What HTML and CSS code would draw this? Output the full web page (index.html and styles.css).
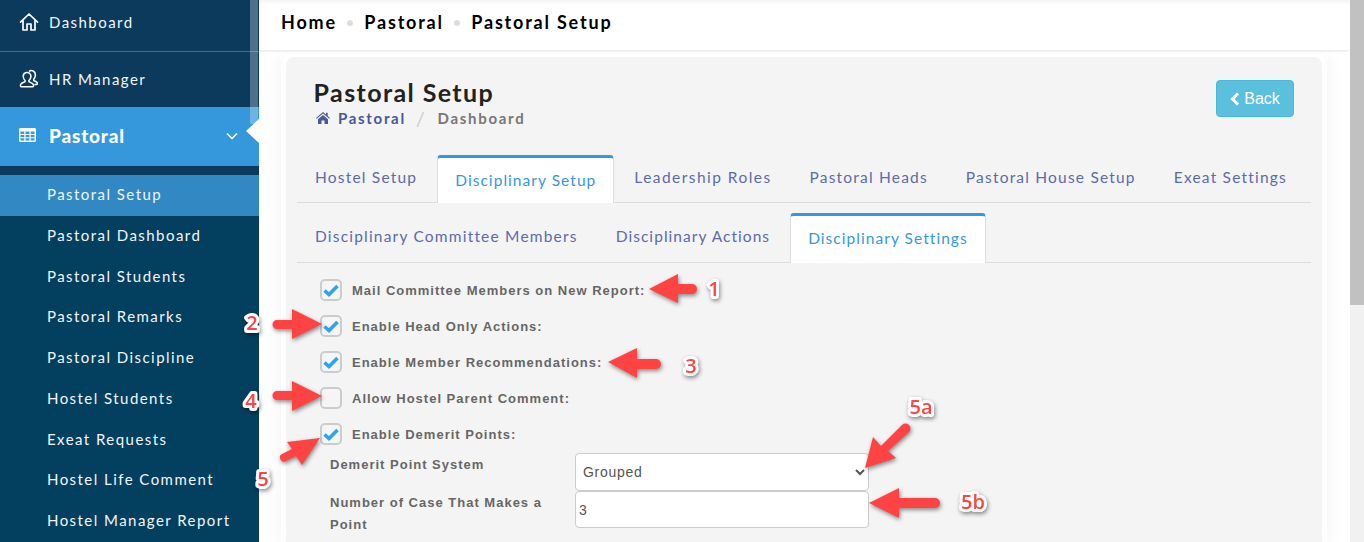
FILE: index.html
```html
<!DOCTYPE html>
<html lang="en">
<head>
<meta charset="utf-8">
<title>Pastoral Setup</title>
<link rel="stylesheet" href="styles.css">
</head>
<body>
<div class="app">
  <aside class="sidebar">
    <div class="thumb"></div>
    <a class="top-item first">
      <svg class="top-icon" viewBox="0 0 20 20"><path d="M1.500 10.200 10 2l8.500 8.200M4 8v10h4v-6h4v6h4V8" fill="none" stroke="#fff" stroke-width="1.700" stroke-linejoin="round" stroke-linecap="round"/></svg>
      <span>Dashboard</span>
    </a>
    <a class="top-item second">
      <svg class="top-icon" viewBox="0 0 20 20"><path d="M7.500 3.500c-2.300.3-3.500 2-3.200 4.500.2 1.600.9 2.800 1.800 3.500v1.200c-1.500.8-4 1.200-4.600 3-.2.800.1 2 1 2h11c1 0 1.200-1.200 1-2-.6-1.800-3.200-2.200-4.600-3v-1.200c1.600-1.300 2.300-4 1.600-6-.5-1.500-2-2.300-4-2zM10 2.500c1-1 2.800-1.200 4.200-.5 2 1.100 2.500 3.600 1.800 6-.3 1-.8 1.800-1.300 2.300v1.200c1.100.6 3 1 3.500 2.300.3.800 0 1.700-.7 1.700h-2" fill="none" stroke="#fff" stroke-width="1.500" stroke-linejoin="round"/></svg>
      <span>HR Manager</span>
    </a>
    <a class="top-item active">
      <svg class="grid-icon" viewBox="0 0 17 14"><path d="M0 1.500C0 .7.700 0 1.500 0h14c.8 0 1.500.7 1.500 1.500v11c0 .8-.7 1.500-1.500 1.500h-14C.7 14 0 13.300 0 12.500zM1.500 3.500v2.400h3.800V3.500zm5 0v2.400h4V3.500zm5.200 0v2.400h3.800V3.500zM1.500 7v2.200h3.800V7zm5 0v2.200h4V7zm5.200 0v2.200h3.800V7zM1.500 10.300v2.200h3.800v-2.200zm5 0v2.200h4v-2.200zm5.200 0v2.200h3.800v-2.200z" fill="#fff" fill-rule="evenodd"/></svg>
      <span>Pastoral</span>
      <svg class="chevron" viewBox="0 0 12 8"><path d="M1 1.500 6 6.500l5-5" fill="none" stroke="#fff" stroke-width="1.500"/></svg>
      <i class="notch"></i>
    </a>
    <nav class="submenu">
      <a class="sub-item current">Pastoral Setup</a>
      <a class="sub-item">Pastoral Dashboard</a>
      <a class="sub-item">Pastoral Students</a>
      <a class="sub-item">Pastoral Remarks</a>
      <a class="sub-item">Pastoral Discipline</a>
      <a class="sub-item">Hostel Students</a>
      <a class="sub-item">Exeat Requests</a>
      <a class="sub-item">Hostel Life Comment</a>
      <a class="sub-item">Hostel Manager Report</a>
    </nav>
  </aside>

  <main class="main">
    <header class="topbar">
      <span>Home</span><i class="dot"></i><span>Pastoral</span><i class="dot"></i><span>Pastoral Setup</span>
    </header>
    <section class="card">
      <div class="card-head">
        <div>
          <h1 class="title">Pastoral Setup</h1>
          <div class="crumbs">
            <svg class="crumb-home" viewBox="0 0 14 12"><path d="M7 0 0 6l.7.800L7 1.500l6.300 5.300.7-.8-2.300-2V.7H10v1.900zM2 7.200V12h3.500V8.500h3V12H12V7.200L7 3z" fill="#47589b"/></svg>
            <b class="crumb-link">Pastoral</b><span class="slash">/</span><b class="crumb-text">Dashboard</b>
          </div>
        </div>
        <a class="back">
          <svg class="back-icon" viewBox="0 0 10 14"><path d="M8 1.500 2.500 7 8 12.500" fill="none" stroke="#fff" stroke-width="3"/></svg>Back
        </a>
      </div>

      <div class="tabs tabs-main">
        <a class="tab">Hostel Setup</a>
        <a class="tab on tight">Disciplinary Setup</a>
        <a class="tab wide">Leadership Roles</a>
        <a class="tab">Pastoral Heads</a>
        <a class="tab">Pastoral House Setup</a>
        <a class="tab">Exeat Settings</a>
      </div>
      <div class="tabs tabs-sub">
        <a class="tab">Disciplinary Committee Members</a>
        <a class="tab tight">Disciplinary Actions</a>
        <a class="tab on tight">Disciplinary Settings</a>
      </div>

      <div class="form">
        <label class="check-row"><span class="box"><svg viewBox="0 0 16 13"><path d="M1.500 6.500l4.500 4L14.500 2" fill="none" stroke="#2ea3f2" stroke-width="3.600"/></svg></span>Mail Committee Members on New Report:</label>
        <label class="check-row"><span class="box"><svg viewBox="0 0 16 13"><path d="M1.500 6.500l4.500 4L14.500 2" fill="none" stroke="#2ea3f2" stroke-width="3.600"/></svg></span>Enable Head Only Actions:</label>
        <label class="check-row"><span class="box"><svg viewBox="0 0 16 13"><path d="M1.500 6.500l4.500 4L14.500 2" fill="none" stroke="#2ea3f2" stroke-width="3.600"/></svg></span>Enable Member Recommendations:</label>
        <label class="check-row"><span class="box"></span>Allow Hostel Parent Comment:</label>
        <label class="check-row"><span class="box"><svg viewBox="0 0 16 13"><path d="M1.500 6.500l4.500 4L14.500 2" fill="none" stroke="#2ea3f2" stroke-width="3.600"/></svg></span>Enable Demerit Points:</label>
        <div class="field first-field">
          <label class="field-label">Demerit Point System</label>
          <select class="control"><option>Grouped</option></select>
        </div>
        <div class="field">
          <label class="field-label">Number of Case That Makes a Point</label>
          <input class="control" type="text" value="3">
        </div>
      </div>
    </section>
  </main>

  <div class="scrollbar"><div class="scroll-thumb"></div></div>

  <svg class="notes" viewBox="0 0 1364 542" width="1364" height="542">
    <g class="arrow">
      <path d="M649 289 678 274V284H692a5 5 0 0 1 0 10H678V303Z"/>
      <path d="M608 362 637 348V359H656a5 5 0 0 1 0 10H637V378Z"/>
      <path d="M322 324 292 309V320H277a4.500 4.500 0 0 0 0 9H292V339Z"/>
      <path d="M322 396 292 381V391H277a4.500 4.500 0 0 0 0 9H292V411Z"/>
      <path d="M320 438 287 442 292 449 282 454a3 3 0 0 0 4 7L296 456 302 465Z"/>
      <path d="M865 468 873 437 881 446 902 425a4 4 0 0 1 7 7L888 451 896 458Z"/>
      <path d="M869 503 899 488V498H935a5 5 0 0 1 0 10H899V518Z"/>
    </g>
    <g class="num">
      <text x="714" y="296">1</text>
      <text x="252" y="330">2</text>
      <text x="691" y="373">3</text>
      <text x="251" y="408">4</text>
      <text x="263" y="486">5</text>
      <text x="921" y="414">5a</text>
      <text x="973" y="509">5b</text>
    </g>
  </svg>
</div>
</body>
</html>
```
FILE: styles.css
```css
* { box-sizing: border-box; }
html, body { margin: 0; height: 542px; overflow: hidden; }
body { font-family: "Lato", "Liberation Sans", sans-serif; background: #fff; }
a { text-decoration: none; display: block; }

.app { position: relative; display: flex; width: 1364px; height: 542px; overflow: hidden; }

.sidebar { position: relative; flex: 0 0 259px; background: #03405f; color: #fff; display: flex; flex-direction: column; }
.thumb { position: absolute; top: 0; right: 1px; width: 8px; height: 124px; background: rgba(255,255,255,.28); z-index: 2; }
.top-item { display: flex; align-items: center; background: #0c3a5c; padding-left: 19px; font-size: 15px; letter-spacing: 1.450px; color: #f2f5f8; }
.top-item.first { height: 52px; border-bottom: 1px solid #4b6a83; padding-bottom: 8px; }
.top-item.second { height: 55px; padding-bottom: 2px; }
.top-icon { width: 20px; height: 20px; margin-right: 10px; }
.top-item.active { position: relative; height: 59px; background: #3598dc; font-size: 19px; font-weight: 900; letter-spacing: .8px; color: #fff; padding-bottom: 2px; margin-bottom: 9px; box-shadow: 0 9px 0 #0c3a5c; }
.grid-icon { width: 17px; height: 14px; margin-right: 13px; margin-bottom: 2px; }
.chevron { position: absolute; left: 226px; top: 25px; width: 12px; height: 8px; }
.notch { position: absolute; right: 0; top: 12px; width: 0; height: 0; border-style: solid; border-color: transparent #fff transparent transparent; border-width: 12px 13px 12px 0; }
.submenu { display: flex; flex-direction: column; }
.sub-item { height: 40.750px; flex: none; line-height: 39px; padding-left: 47px; font-size: 15px; letter-spacing: 1.450px; color: #f2f5f8; }
.sub-item.current { background: #3188c2; }

.main { flex: 0 0 1091px; display: flex; flex-direction: column; background: #fff; }
.topbar { position: relative; z-index: 1; height: 52px; flex: none; display: flex; align-items: center; padding: 0 0 7px 22px; background: #fff; border-bottom: 2px solid #f0f0f0; border-radius: 0 0 4px 0; box-shadow: inset 0 6px 6px -6px #e8e8e8; font-size: 18px; font-weight: 700; letter-spacing: 1.800px; color: #000; }
.dot { width: 6px; height: 6px; border-radius: 50%; background: #ddd; margin: 2px 11px 0 10.500px; }

.card { width: 1036px; height: 490px; margin: 5px 0 0 27px; background: #f4f4f4; border-radius: 8px 8px 0 0; padding: 0 11px; box-shadow: 0 0 0 5px #fff, 0 0 20px 5px rgba(0,0,0,.05); }
.card-head { display: flex; justify-content: space-between; padding: 21px 17px 0; height: 98px; }
.title { margin: 0 0 0 -.4px; font-size: 25px; line-height: 28px; font-weight: 700; letter-spacing: 1.400px; color: #222; }
.crumbs { display: flex; align-items: center; margin-top: 2px; height: 20px; font-size: 15px; letter-spacing: 1.700px; }
.crumb-home { width: 14px; height: 12px; margin: 0 8px 0 2px; }
.crumb-link { color: #47589b; }
.slash { color: #ccc; margin: 0 11px 0 10px; font-size: 20px; font-weight: 400; }
.crumb-text { color: #777; }
.back { display: flex; align-items: center; justify-content: center; width: 78px; height: 37px; margin: 2px 0 0; background: #5bc0de; border: 1px solid #46b8da; border-radius: 4px; color: #fff; font: 400 16px "Liberation Sans", sans-serif; }
.back-icon { width: 10px; height: 14px; margin-right: 4px; }

.tabs { display: flex; align-items: flex-end; border-bottom: 1px solid #ddd; }
.tabs-main { height: 48px; }
.tabs-sub { height: 50px; margin-top: 10px; }
.tab { font-size: 15.500px; letter-spacing: 1.200px; color: #5c6bac; padding: 0 18px; margin-right: 2px; height: 47px; }
.tab.tight { letter-spacing: 1.050px; }
.tab.wide { letter-spacing: 1.450px; }
.tabs-main .tab { line-height: 45px; }
.tabs-sub .tab { line-height: 42px; }
.tab.on { background: #fff; color: #3598dc; border: 1px solid #ddd; border-top: 3px solid #3598dc; border-bottom: 0; border-radius: 4px 4px 0 0; padding: 0 17px; position: relative; top: 1px; }
.tabs-main .tab.on { height: 48px; line-height: 44px; }
.tabs-sub .tab.on { height: 50px; line-height: 44px; }

.form { padding: 9px 0 0 23px; font: 700 13px "Liberation Sans", sans-serif; letter-spacing: 1px; color: #666; }
.check-row { display: flex; align-items: center; height: 36px; }
.box { flex: none; width: 22px; height: 22px; margin-right: 10px; border: 2px solid #ccc; border-radius: 5px; display: flex; align-items: center; justify-content: center; background: #f5f5f5; }
.box svg { width: 16px; height: 13px; }
.field { display: flex; margin-left: 10px; }
.first-field { margin-top: 1px; }
.field-label { flex: 0 0 245px; padding: 1px 20px 0 0; line-height: 22px; }
.control { width: 294px; height: 37px; flex: none; background: #fff; border: 1px solid #ccc; border-radius: 4px; padding: 0 3px; font: 400 14px "Liberation Sans", sans-serif; color: #555; letter-spacing: .7px; }
select.control { height: 38px; padding-left: 3px; }

.scrollbar { position: relative; z-index: 1; flex: 0 0 14px; background: #f1f1f1; }
.scroll-thumb { height: 305px; background: #c1c1c1; }

.notes { position: absolute; left: 0; top: 0; z-index: 2; pointer-events: none; }
.arrow { fill: #ff4343; filter: drop-shadow(1px 2px 2px rgba(0,0,0,.45)); }
.num { font: 600 20px "Open Sans", sans-serif; text-anchor: middle; fill: #ff4343; stroke: #fff; stroke-width: 6px; stroke-linejoin: round; paint-order: stroke; filter: drop-shadow(1px 2px 2px rgba(0,0,0,.45)); }
```
